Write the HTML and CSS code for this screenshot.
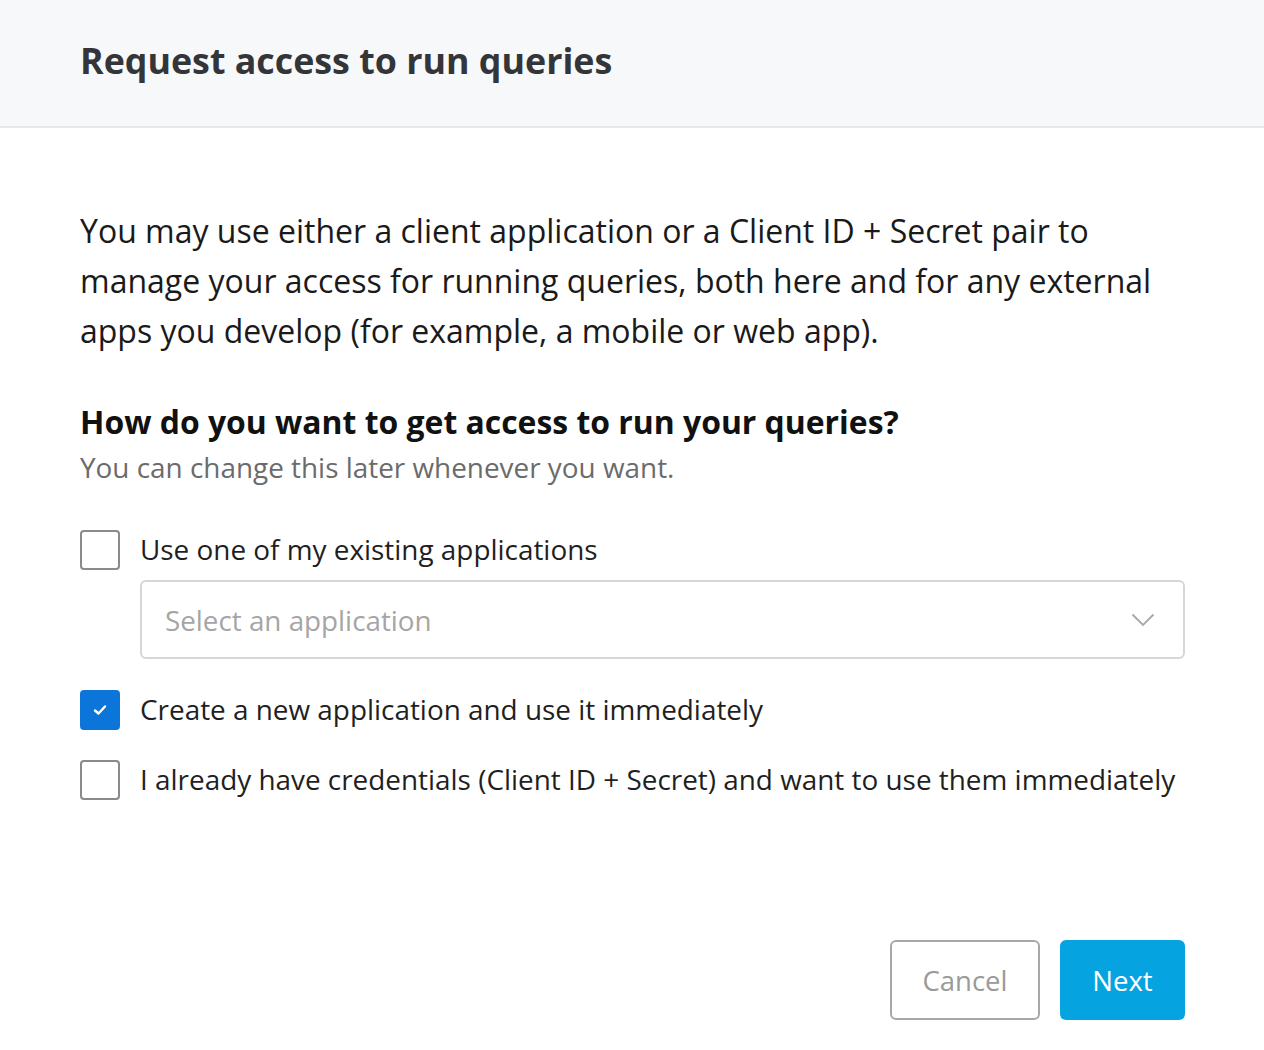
FILE: index.html
```html
<!DOCTYPE html>
<html lang="en">
<head>
<meta charset="utf-8">
<title>Request access to run queries</title>
<link rel="stylesheet" href="styles.css">
</head>
<body>
<div class="modal">
  <header class="modal-header">
    <h1 class="title">Request access to run queries</h1>
  </header>
  <main class="modal-body">
    <p class="intro">You may use either a client application or a Client ID + Secret pair to manage your access for running queries, both here and for any external apps you develop (for example, a mobile or web app).</p>
    <h2 class="question">How do you want to get access to run your queries?</h2>
    <p class="hint">You can change this later whenever you want.</p>
    <div class="options">
      <label class="option">
        <span class="box"></span>
        <span class="label-text">Use one of my existing applications</span>
      </label>
      <div class="select">
        <span class="placeholder">Select an application</span>
        <svg class="chevron" width="24" height="14" viewBox="0 0 24 14"><path d="M1.5 1.5 L12 12 L22.5 1.5" fill="none" stroke="#a8a8a8" stroke-width="1.8"/></svg>
      </div>
      <label class="option">
        <span class="box checked">
          <svg width="16" height="12" viewBox="0 0 16 12"><path d="M3 6.5 L6.5 9.5 L13 2.5" fill="none" stroke="#fff" stroke-width="2.4" stroke-linecap="round" stroke-linejoin="round"/></svg>
        </span>
        <span class="label-text">Create a new application and use it immediately</span>
      </label>
      <label class="option">
        <span class="box"></span>
        <span class="label-text">I already have credentials (Client ID + Secret) and want to use them immediately</span>
      </label>
    </div>
  </main>
  <footer class="modal-footer">
    <button class="btn btn-cancel">Cancel</button>
    <button class="btn btn-next">Next</button>
  </footer>
</div>
</body>
</html>
```
FILE: styles.css
```css
html, body {
  margin: 0;
  padding: 0;
  background: #ffffff;
}
body {
  font-family: "Open Sans", "Liberation Sans", sans-serif;
  color: #1f1f1f;
}
.modal {
  width: 1264px;
  height: 1050px;
  display: flex;
  flex-direction: column;
}
.modal-header {
  height: 126px;
  background: #f7f8fa;
  border-bottom: 2px solid #e7e8ea;
  display: flex;
  align-items: center;
  padding: 0 80px;
  box-sizing: content-box;
}
.title {
  margin: 0;
  font-size: 35.8px;
  font-weight: 700;
  color: #333538;
  margin-top: -6px;
}
.modal-body {
  padding: 78px 79px 0 80px;
}
.intro {
  margin: 0;
  font-size: 32px;
  line-height: 50px;
  color: #1a1a1a;
}
.question {
  margin: 44px 0 0;
  font-size: 31.9px;
  font-weight: 700;
  line-height: 44px;
  color: #111;
}
.hint {
  margin: 4px 0 0;
  font-size: 27.9px;
  line-height: 38px;
  color: #6b6b6b;
}
.options {
  margin-top: 44px;
  display: flex;
  flex-direction: column;
}
.option {
  display: flex;
  align-items: center;
  gap: 20px;
  height: 40px;
}
.box {
  width: 40px;
  height: 40px;
  box-sizing: border-box;
  border: 2px solid #8a8a8a;
  border-radius: 4px;
  background: #fff;
  display: flex;
  align-items: center;
  justify-content: center;
  flex: none;
}
.box.checked {
  background: #0c75d9;
  border-color: #0c75d9;
}
.label-text {
  font-size: 27.9px;
  color: #1f1f1f;
  white-space: nowrap;
  margin-top: -2px;
}
.select {
  margin: 10px 0 31px 60px;
  height: 79px;
  box-sizing: border-box;
  border: 2px solid #d6d6d6;
  border-radius: 6px;
  display: flex;
  align-items: center;
  justify-content: space-between;
  padding: 0 28px 0 23px;
}
.placeholder {
  font-size: 27.8px;
  color: #a5a5a5;
}
.option + .option {
  margin-top: 30px;
}
.modal-footer {
  margin-top: auto;
  padding: 0 79px 30px 80px;
  display: flex;
  justify-content: flex-end;
  gap: 20px;
}
.btn {
  height: 80px;
  border-radius: 6px;
  font-family: inherit;
  font-size: 27.5px;
  padding: 0;
  cursor: pointer;
}
.btn-cancel {
  width: 150px;
  background: #fff;
  border: 2px solid #a8a8a8;
  color: #9a9a9a;
}
.btn-next {
  width: 125px;
  background: #06a3e1;
  border: none;
  color: #fff;
}
```
